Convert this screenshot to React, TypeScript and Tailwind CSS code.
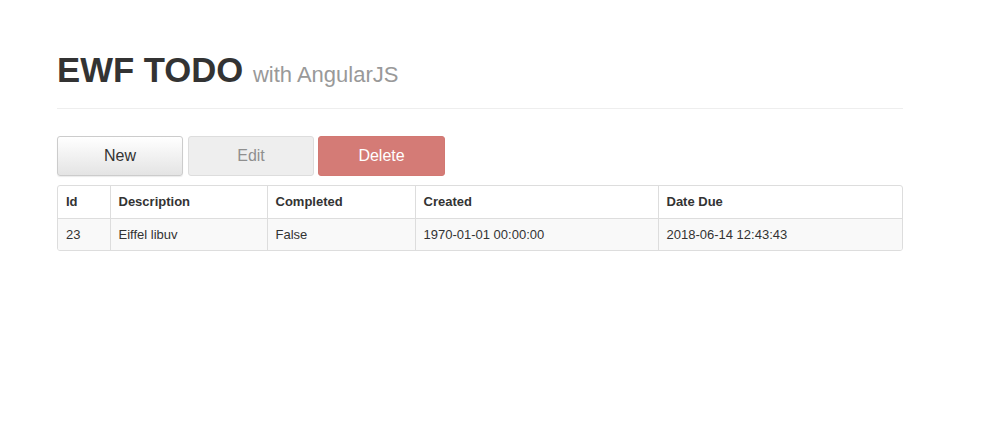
const rows = [
  { id: 23, description: "Eiffel libuv", completed: "False", created: "1970-01-01 00:00:00", due: "2018-06-14 12:43:43" },
];

const cols = [
  { key: "Id", w: "w-[52px]" },
  { key: "Description", w: "w-[157px]" },
  { key: "Completed", w: "w-[148px]" },
  { key: "Created", w: "w-[243px]" },
  { key: "Date Due", w: "" },
];

export default function App() {
  return (
    <div className="min-h-screen bg-white text-[#333] font-['Liberation_Sans',Arial,sans-serif]">
      <div className="ml-[57px] w-[846px] pt-[48px]">
        <div className="border-b border-[#eee] pb-[11px]">
          <h1 className="text-[34.7px] font-bold leading-[44px] text-[#333]">
            EWF TODO{" "}
            <span className="text-[22px] font-normal text-[#999]">with AngularJS</span>
          </h1>
        </div>

        <div className="mt-[27px] flex gap-[5px]">
          <button className="h-[40px] w-[126px] rounded-[3px] border border-[#ccc] bg-gradient-to-b from-white to-[#e4e4e4] text-[16px] text-[#333] shadow-[0_1px_1px_rgba(0,0,0,0.08)]">
            New
          </button>
          <button className="h-[40px] w-[126px] rounded-[3px] border border-[#ddd] bg-[#eee] text-[16px] text-[#8f8f8f]">
            Edit
          </button>
          <button className="-ml-px h-[40px] w-[127px] rounded-[3px] border border-[#d27872] bg-[#d47b76] text-[16px] text-white">
            Delete
          </button>
        </div>

        <div className="mt-[9px] overflow-hidden rounded-[3px] border border-[#ddd]">
          <table className="w-full border-collapse text-[13px]">
            <thead>
              <tr className="h-[32px]">
                {cols.map((c, i) => (
                  <th
                    key={c.key}
                    className={`${c.w} ${i > 0 ? "border-l border-[#ddd]" : ""} border-b border-[#ddd] px-[8px] text-left font-bold`}
                  >
                    {c.key}
                  </th>
                ))}
              </tr>
            </thead>
            <tbody>
              {rows.map((r) => (
                <tr key={r.id} className="h-[32px] bg-[#f9f9f9]">
                  <td className="px-[8px]">{r.id}</td>
                  <td className="border-l border-[#ddd] px-[8px]">{r.description}</td>
                  <td className="border-l border-[#ddd] px-[8px]">{r.completed}</td>
                  <td className="border-l border-[#ddd] px-[8px]">{r.created}</td>
                  <td className="border-l border-[#ddd] px-[8px]">{r.due}</td>
                </tr>
              ))}
            </tbody>
          </table>
        </div>
      </div>
    </div>
  );
}
